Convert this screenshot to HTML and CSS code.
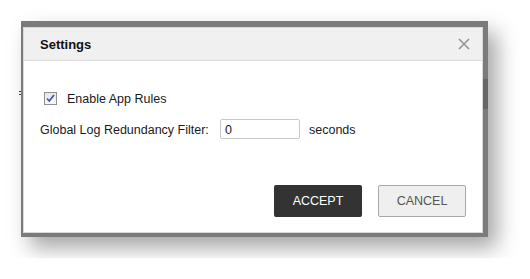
FILE: index.html
```html
<!DOCTYPE html>
<html>
<head>
<meta charset="utf-8">
<link rel="stylesheet" href="styles.css">
</head>
<body>
<div class="page">
  <div class="backdrop-marks"><span></span><span></span></div>
  <div class="frame">
    <div class="frame-dark"></div>
    <div class="dialog">
      <div class="header">
        <span class="title">Settings</span>
        <svg class="close" width="12" height="12" viewBox="0 0 12 12"><path d="M1 1L11 11M11 1L1 11" stroke="#8b969e" stroke-width="1.6" fill="none"/></svg>
      </div>
      <div class="content">
        <label class="check-row">
          <span class="checkbox"><svg width="11" height="11" viewBox="0 0 11 11"><path d="M2 5.5L4.3 8L9 2" stroke="#3d55a8" stroke-width="1.7" fill="none"/></svg></span>
          <span class="check-label">Enable App Rules</span>
        </label>
        <div class="filter-row">
          <span class="filter-label">Global Log Redundancy Filter:</span>
          <span class="input">0</span>
          <span class="unit">seconds</span>
        </div>
        <div class="actions">
          <span class="btn btn-accept">ACCEPT</span>
          <span class="btn btn-cancel">CANCEL</span>
        </div>
      </div>
    </div>
  </div>
</div>
</body>
</html>
```
FILE: styles.css
```css
html, body {
  margin: 0;
  padding: 0;
  background: #ffffff;
}
body {
  font-family: "Liberation Sans", Arial, sans-serif;
  font-size: 12.5px;
  color: #1a1a1a;
}
.page {
  position: relative;
  padding: 21px;
  width: 467px;
}
.backdrop-marks {
  position: absolute;
  left: 19px;
  top: 91px;
  display: flex;
  flex-direction: column;
  gap: 2px;
}
.backdrop-marks span {
  display: block;
  width: 2px;
  height: 1px;
  background: #444;
}
.frame {
  position: relative;
  width: 460px;
  background: #7b7b7b;
  padding: 6px 5px 4px 2px;
  box-shadow: 9px 11px 20px rgba(0, 0, 0, 0.35);
}
.frame-dark {
  position: absolute;
  right: 0;
  top: 58px;
  width: 5px;
  height: 30px;
  background: #666;
}
.dialog {
  background: #fff;
  border: 1px solid #d9d9d9;
}
.header {
  height: 32px;
  background: #f0f0f0;
  border-bottom: 1px solid #dcdcdc;
  display: flex;
  align-items: center;
  justify-content: space-between;
  padding: 0 12px 0 16px;
}
.title {
  font-weight: bold;
  font-size: 13px;
  color: #111;
}
.content {
  padding: 31px 16px 15px 16px;
}
.check-row {
  display: flex;
  align-items: center;
  margin-left: 4px;
  height: 13px;
}
.checkbox {
  width: 11px;
  height: 11px;
  border: 1px solid #8f8f8f;
  background: linear-gradient(#e6e6e6, #f8f8f8);
  display: flex;
  align-items: center;
  justify-content: center;
}
.check-label {
  margin-left: 10px;
  padding-top: 1px;
}
.filter-row {
  display: flex;
  align-items: center;
  margin-top: 14px;
  height: 20px;
}
.filter-label {
  width: 180px;
  padding-top: 1px;
}
.input {
  box-sizing: border-box;
  width: 80px;
  height: 20px;
  border: 1px solid #c8c8c8;
  border-radius: 2px;
  padding: 3px 4px 0 4px;
  line-height: 15px;
}
.unit {
  margin-left: 9px;
  padding-top: 1px;
}
.actions {
  display: flex;
  justify-content: flex-end;
  gap: 16px;
  margin-top: 46px;
}
.btn {
  box-sizing: border-box;
  width: 88px;
  height: 32px;
  border-radius: 2px;
  display: flex;
  align-items: center;
  justify-content: center;
  font-size: 12.5px;
}
.btn-accept {
  background: #333;
  color: #fff;
}
.btn-cancel {
  background: #efefef;
  border: 1px solid #a8a8a8;
  color: #555;
}
```
